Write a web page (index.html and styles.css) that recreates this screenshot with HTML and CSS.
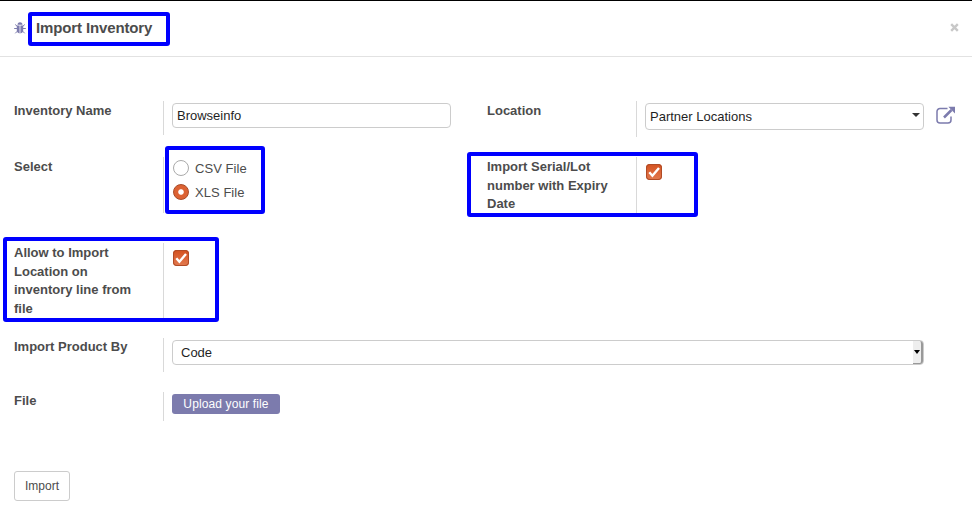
FILE: index.html
```html
<!DOCTYPE html>
<html lang="en">
<head>
<meta charset="utf-8">
<title>Import Inventory</title>
<link rel="stylesheet" href="styles.css">
</head>
<body>
<main class="modal">
  <header class="modal-header">
    <svg class="bug" viewBox="0 0 12 14" width="12" height="14" fill="none" stroke="#7c7bad">
      <path d="M3.500 3.800a2.500 2.500 0 0 1 5 0z" fill="#7c7bad" stroke="none"/>
      <path d="M2.800 4.600h2.800v7.800C4 12.200 2.800 11 2.800 9.500zM6.400 4.600h2.800v4.900c0 1.500-1.200 2.700-2.800 2.900z" fill="#7c7bad" stroke="none"/>
      <path d="M1.200 3.500 3.200 5.300M10.800 3.500 8.800 5.300M.2 7.500H3M9 7.500h2.800M1.300 12.300l2.100-2.200M10.700 12.300l-2.100-2.200"/>
    </svg>
    <h1 class="title">Import Inventory</h1>
    <button class="close" aria-label="Close"><svg viewBox="0 0 9 9" width="9" height="9"><path d="M1.200 1.200l6.600 6.600M7.800 1.200L1.200 7.800" stroke="#c8c8c8" stroke-width="2.400"/></svg></button>
    <div class="highlight mark-title"></div>
  </header>

  <form class="form">
    <label class="label">Inventory Name</label>
    <div class="field short"><input class="control" type="text" value="Browseinfo"></div>
    <label class="label">Location</label>
    <div class="field with-link">
      <div class="control location"><span>Partner Locations</span><i class="caret"></i></div>
      <svg class="external" viewBox="0 0 20 18" width="20" height="18" fill="none" stroke="#7c7bad">
        <path d="M11.500 2.500H4A3 3 0 0 0 1 5.500V14a3 3 0 0 0 3 3h8a3 3 0 0 0 3-3v-3.500" stroke-width="1.500"/>
        <path d="M8 11.500 15.500 4" stroke-width="2.500"/>
        <path d="M12.300.8H19v6.700z" fill="#7c7bad" stroke="none"/>
      </svg>
    </div>

    <label class="label">Select</label>
    <div class="field radios">
      <label class="option"><span class="radio"></span>CSV File</label>
      <label class="option"><span class="radio checked"></span>XLS File</label>
    </div>
    <label class="label">Import Serial/Lot number with Expiry Date</label>
    <div class="field medium"><span class="check"><svg viewBox="0 0 16 16" width="16" height="16"><path d="M3.300 8.200 6.400 11.700 13 4" fill="none" stroke="#fff" stroke-width="2.400"/></svg></span></div>

    <label class="label">Allow to Import Location on inventory line from file</label>
    <div class="field wide"><span class="check"><svg viewBox="0 0 16 16" width="16" height="16"><path d="M3.300 8.200 6.400 11.700 13 4" fill="none" stroke="#fff" stroke-width="2.400"/></svg></span></div>

    <label class="label raised">Import Product By</label>
    <div class="field wide"><div class="control product"><span>Code</span><span class="arrow"><i class="caret dark"></i></span></div></div>

    <label class="label raised">File</label>
    <div class="field wide"><button type="button" class="upload">Upload your file</button></div>

    <div class="highlight mark-radio"></div>
    <div class="highlight mark-serial"></div>
    <div class="highlight mark-allow"></div>
  </form>

  <footer class="footer"><button class="import">Import</button></footer>
</main>
</body>
</html>
```
FILE: styles.css
```css
* { box-sizing: border-box; }
body {
  margin: 0;
  background: #fff;
  color: #4c4c4c;
  font: 13px/18.57px "Liberation Sans", Arial, sans-serif;
}
button, input { font: inherit; color: inherit; }
.modal { position: relative; height: 517px; overflow: hidden; border-top: 1px solid #000; }
.modal-header {
  display: flex;
  align-items: center;
  height: 56px;
  padding: 0 13px 2px 14px;
  border-bottom: 1px solid #e2e2e2;
}
.bug { margin-right: 10px; }
.title { margin: 0; font-size: 15px; line-height: 20px; letter-spacing: -.13px; }
.close { display: flex; margin-left: auto; padding: 0; border: 0; background: none; }

.form {
  display: grid;
  grid-template-columns: 149px 324px 149px 324px;
  grid-template-rows: 36px 66px 75px 34px 29px;
  row-gap: 20px;
  padding: 44px 0 0 14px;
}
.label { padding-right: 24px; font-weight: bold; }
.form > .label { padding-top: 1px; }
.form > .raised { padding-top: 0; }
.field { border-left: 1px solid #d9d9d9; padding: 2px 36px 0 8px; }
.short { height: 34px; }
.radios, .medium { height: 56px; }
.wide { grid-column: 2 / -1; }
.control {
  display: flex;
  align-items: center;
  width: 279px;
  height: 25px;
  padding: 0 4px;
  border: 1px solid #ccc;
  border-radius: 4px;
  background: #fff;
  color: #1f1f1f;
}
.control span:first-child { padding-top: 1px; }
.with-link { display: flex; align-items: flex-start; padding-right: 0; }
.location { height: 27px; padding-right: 3px; flex: none; justify-content: space-between; }
.external { flex: none; margin: 3px 0 0 12px; }
.caret { border: 4px solid transparent; border-top-color: #333; border-bottom: 0; margin-bottom: 3px; }
.caret.dark { border-width: 3px; border-top: 4px solid #000; border-bottom: 0; margin: 0; }
.product { width: 752px; padding: 0 0 0 8px; justify-content: space-between; }
.arrow {
  display: flex;
  align-items: center;
  justify-content: center;
  width: 10px;
  height: 23px;
  background: #eee;
  border-right: 2px solid #999;
  border-bottom: 1px solid #999;
  border-radius: 0 3px 3px 0;
}
.option { display: flex; align-items: center; height: 24px; letter-spacing: .05px; }
.radios { padding-top: 0; }
.radio {
  width: 16px;
  height: 16px;
  margin: -2px 6px 0 1px;
  border: 1px solid #aaa;
  border-radius: 50%;
  background: #fff;
}
.radio.checked { border-color: #a84a26; background: radial-gradient(circle, #fff 0 2.3px, #dc6233 3.2px); }
.check {
  display: flex;
  width: 16px;
  height: 16px;
  margin: 5px 0 0 1px;
  border-radius: 4px;
  background: linear-gradient(#d4511f, #e27a50);
  box-shadow: inset 0 0 0 1px #b04b26;
}
.upload {
  display: block;
  width: 108px;
  height: 20px;
  padding: 0;
  border: 0;
  border-radius: 3px;
  background: #7c7bad;
  color: #fff;
  font-size: 12px;
  line-height: 20px;
  letter-spacing: .12px;
}
.footer { padding: 50px 14px 0; }
.import {
  display: block;
  width: 56px;
  height: 30px;
  padding: 0;
  border: 1px solid #ccc;
  border-radius: 3px;
  background: #fff;
  font-size: 12px;
}

/* Callouts lie over the dialog */
.highlight { position: absolute; border: 4px solid #00f; border-radius: 3px; pointer-events: none; }
.mark-title { left: 28px; top: 11px; width: 142px; height: 34px; }
.mark-radio { left: 165px; top: 145px; width: 100px; height: 68px; }
.mark-serial { left: 467px; top: 151px; width: 231px; height: 65px; }
.mark-allow { left: 3px; top: 236px; width: 216px; height: 85px; }
```
